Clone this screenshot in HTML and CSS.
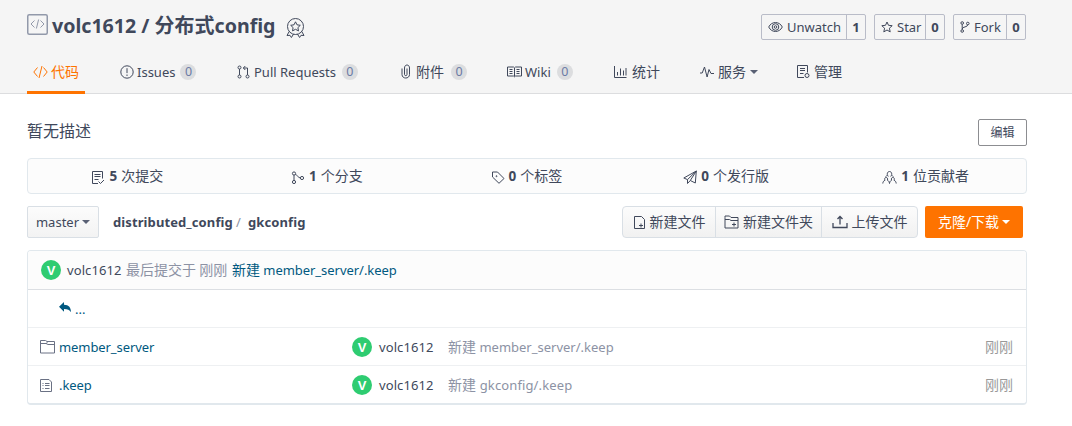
FILE: index.html
```html
<!DOCTYPE html>
<html lang="zh-CN">
<head>
<meta charset="utf-8">
<title>volc1612 / 分布式config</title>
<link rel="stylesheet" href="styles.css">
</head>
<body>
<header class="header">
  <div class="title-row">
    <h1 class="title">
      <svg class="title-icon" width="21" height="21" viewBox="0 0 21 21"><rect x=".75" y=".75" width="19.5" height="19.5" rx="1.5" stroke-width="1.5"/><path d="M7.500 6.500 4 10l3.500 3.500M13.500 6.500 17 10l-3.500 3.500M11.600 5.500 9.400 14.500"/></svg>
      <span class="title-text">volc1612 / <span class="zh">分布式</span>config</span>
      <svg class="medal" width="19" height="20" viewBox="0 0 19 20"><circle cx="9.500" cy="8.500" r="8"/><path d="m9.500 3.800 1.500 3 3.300.5-2.400 2.300.6 3.300-3-1.600-3 1.600.6-3.300-2.400-2.300 3.300-.5zM3.200 13.500 1 17.500l3-.2 1.400 2.200 2.200-3.500M15.800 13.500l2.200 4-3-.2-1.400 2.200-2.200-3.500"/></svg>
    </h1>
    <div class="counters">
      <div class="counter watch">
        <span class="counter-label"><svg width="15" height="12" viewBox="0 0 15 12"><path d="M.7 6C3.500 0 11.500 0 14.300 6 11.500 12 3.500 12 .7 6z"/><circle cx="7.500" cy="6" r="3.300"/><circle cx="7.500" cy="6" r="1.300"/></svg>Unwatch</span><b>1</b>
      </div>
      <div class="counter star">
        <span class="counter-label"><svg width="12" height="12" viewBox="0 0 12 12"><path d="m6 1 1.500 3.300 3.700.4-2.800 2.500.8 3.700L6 9l-3.200 1.900.8-3.700L.8 4.700l3.700-.4z"/></svg>Star</span><b>0</b>
      </div>
      <div class="counter fork">
        <span class="counter-label"><svg width="10" height="12" viewBox="0 0 10 12"><circle cx="2.200" cy="2" r="1.300"/><circle cx="7.800" cy="2.500" r="1.300"/><circle cx="2.200" cy="10" r="1.300"/><path d="M2.200 3.300v5.400M7.800 3.800c0 2.500-5.600 1.700-5.600 4.200"/></svg>Fork</span><b>0</b>
      </div>
    </div>
  </div>
  <nav class="nav">
    <a class="tab active"><svg width="15" height="14" viewBox="0 0 15 14"><path d="M4.500 2.500.8 7l3.700 4.500M10.500 2.500 14.200 7l-3.700 4.500M9 1 6 13"/></svg><span class="zh">代码</span></a>
    <a class="tab issues"><svg width="14" height="14" viewBox="0 0 14 14"><circle cx="7" cy="7" r="6.200"/><path d="M7 3.200v4.900M7 9.500v1.500"/></svg><span>Issues</span><i class="badge">0</i></a>
    <a class="tab pulls"><svg width="14" height="14" viewBox="0 0 14 14"><circle cx="2.500" cy="2.500" r="1.500"/><circle cx="2.500" cy="11.500" r="1.500"/><circle cx="10.500" cy="11.500" r="1.500"/><path d="M2.500 4v6M10.500 10V3H6.500M8.300 1 6.300 3l2 2"/></svg><span>Pull Requests</span><i class="badge">0</i></a>
    <a class="tab files"><svg width="12" height="15" viewBox="0 0 12 15"><path d="M2 4.500v6c0 4.700 7.500 4.700 7.500 0V4c0-4-5-4-5 0v6.500c0 1.500 2.500 1.500 2.500 0V4.500"/></svg><span class="zh">附件</span><i class="badge">0</i></a>
    <a class="tab wiki"><svg width="15" height="14" viewBox="0 0 15 14"><path d="M.5 2h6l1 .8 1-.8h6v9h-6l-1 .8-1-.8h-6zM7.500 3v8.500M2.500 4.500h3M2.500 6.500h3M2.500 8.500h3M9.500 4.500h3M9.500 6.500h3M9.500 8.500h3"/></svg><span>Wiki</span><i class="badge">0</i></a>
    <a class="tab"><svg width="14" height="14" viewBox="0 0 14 14"><path d="M.5 1v11.500h12M3.500 7v3.500M6.500 3.500v7M9.500 5.500v5M12 3v7.500"/></svg><span class="zh">统计</span></a>
    <a class="tab"><svg width="14" height="14" viewBox="0 0 14 14"><path d="M0 8h2.200l2.300-6 2.600 10L9 4.500l2 4h3"/></svg><span class="zh">服务</span><i class="caret"></i></a>
    <a class="tab manage"><svg width="13" height="15" viewBox="0 0 13 15"><path d="M7 13.500H.5v-12h10v7M3 4.500h5M3 6.500h5M3 9.500h3.500"/><circle cx="10" cy="11.500" r="2"/></svg><span class="zh">管理</span></a>
  </nav>
</header>
<main class="main">
  <div class="desc-row"><span class="desc">暂无描述</span><button class="edit">编辑</button></div>
  <div class="stats">
    <div class="stat"><svg width="14" height="15" viewBox="0 0 14 15"><path d="M7 13.500H1.500v-12h10v7M3.500 4.500h6M3.500 6.500h6M3.500 9.500h4M7.500 11.500l2 2 3.500-3.500"/></svg><b>5</b><span class="zh">次提交</span></div>
    <div class="stat"><svg width="14" height="15" viewBox="0 0 14 15"><circle cx="3" cy="3.500" r="1.600"/><circle cx="3" cy="12" r="1.600"/><circle cx="11" cy="8" r="1.600"/><path d="M3 5.100v5.300M4.300 4.500c2 .4 3 3.300 5 3.500"/></svg><b>1</b><span class="zh">个分支</span></div>
    <div class="stat"><svg width="14" height="15" viewBox="0 0 14 15"><path d="M1.500 2v5L8 13.300 13 8.500 6.500 2z"/><circle cx="5.500" cy="6.200" r=".5"/></svg><b>0</b><span class="zh">个标签</span></div>
    <div class="stat"><svg width="14" height="15" viewBox="0 0 14 15"><path d="M13.300 1 .8 8l3.700 1.600L13.300 1l-1 12-5-2.500L13.300 1M4.500 9.600v3.900l2.800-3"/></svg><b>0</b><span class="zh">个发行版</span></div>
    <div class="stat"><svg width="15" height="15" viewBox="0 0 15 15"><path d="M5.300 4.500c-.5-4 4.900-4 4.400 0-.2 1-.7 1.500-1 2M5.300 4.500c.2 1 .7 1.500 1 2M5.200 5.200 3.700 6.700M9.800 5.200l1.500 1.500M.8 13.500c.2-2 .9-2.700 2.200-3.200C1.300 6.500 6.700 6.500 5.500 10.300c1 .4 1.700 1.300 2 3.200.3-1.900 1-2.800 2-3.200-1.200-3.800 4.200-3.800 2.500 0 1.300.5 2 1.200 2.200 3.200"/></svg><b>1</b><span class="zh">位贡献者</span></div>
  </div>
  <div class="toolbar">
    <button class="branch">master<i class="caret"></i></button>
    <div class="crumbs"><b class="repo">distributed_config</b><span>/</span><b class="dir">gkconfig</b></div>
    <div class="group">
      <button class="new-file"><svg width="13" height="15" viewBox="0 0 13 15"><path d="M1.500 1.500h7l3 3v9h-10zM6 10.500h4M8 8.500v4"/></svg>新建文件</button>
      <button class="new-dir"><svg width="15" height="14" viewBox="0 0 15 14"><path d="M1 2.500V1h4.500L7 2.500h7V13H1zM1 4.500h4.500L7 5.500h7M8 9.500h4M10 7.500v4"/></svg>新建文件夹</button>
      <button class="upload"><svg width="16" height="14" viewBox="0 0 16 14"><path d="M1 8v4.500h14V8M8 9.500V1.500M5.500 4 8 1.500 10.500 4" stroke-width="1.300"/></svg>上传文件</button>
    </div>
    <button class="clone"><span>克隆/下载</span><i class="caret"></i></button>
  </div>
  <section class="tree">
    <div class="commit"><i class="avatar">V</i><span class="author">volc1612</span><span class="muted zh">最后提交于 刚刚</span><a class="link"><span class="zh">新建</span> <span>member_server/.keep</span></a></div>
    <div class="row up"><svg class="reply" width="13" height="11" viewBox="0 0 13 11"><path d="M5 0v2.700c5 .2 7 2.800 7 7.600-1.500-2.600-3.300-3.400-7-3.400v2.800L0 4.700z"/></svg><a class="link">...</a></div>
    <div class="row">
      <div class="name"><svg width="16" height="15" viewBox="0 0 16 15"><path d="M.5 3V1.500h5L7 2.500h7.500V14H.5V3M.5 4.500H6l1.500-1M6 4.500l2 1h6.500"/></svg><a class="link latin">member_server</a></div>
      <div class="who"><i class="avatar">V</i>volc1612</div>
      <div class="msg"><span class="zh">新建</span> <span>member_server/.keep</span></div>
      <div class="age zh">刚刚</div>
    </div>
    <div class="row">
      <div class="name"><svg width="16" height="15" viewBox="0 0 16 15"><path d="M.5 1.500H9l2.500 2.500v9.500H.5zM2.500 5.500h1M5 5.500h4.500M2.500 7.500h1M5 7.500h4.500M2.500 10.500h1M5 10.500h4.500"/></svg><a class="link latin">.keep</a></div>
      <div class="who"><i class="avatar">V</i>volc1612</div>
      <div class="msg keep"><span class="zh">新建</span> gkconfig/.keep</div>
      <div class="age zh">刚刚</div>
    </div>
  </section>
</main>
</body>
</html>
```

FILE: styles.css
```css
* { box-sizing: border-box; }
body {
  margin: 0;
  background: #fff;
  color: #40485b;
  font: 13px/20px "Noto Sans", "Noto Sans CJK SC", sans-serif;
  white-space: nowrap;
}
svg { flex: none; fill: none; stroke: currentColor; stroke-width: 1; }
i { font-style: normal; }
button { font: 14px/20px "Noto Sans", "Noto Sans CJK SC", sans-serif; color: inherit; padding: 0; }
.zh { font-size: 14px; line-height: 18px; font-family: "Noto Sans CJK SC", sans-serif; }
.latin { letter-spacing: -.08px; }
.caret { border: 4px solid transparent; border-top-color: currentColor; border-bottom: 0; margin-left: 3px; flex: none; }

.header {
  height: 94px;
  padding-left: 27px;
  background: #f5f5f5;
  box-shadow: inset 0 -1px #dcdddf;
  display: flex;
  flex-direction: column;
}
.title-row { height: 51px; width: 999px; display: flex; justify-content: space-between; align-items: flex-start; padding-top: 14px; }
.title { margin: -1px 0 0; height: 26px; display: flex; align-items: center; font-size: 19.600px; line-height: 26px; }
.title .zh { font-size: 20px; font-weight: bold; }
.title-icon { color: #9299aa; margin: -4px 4px 0 0; }
.title-text { width: 224px; }
.medal { margin-left: 10px; margin-top: 3px; }
.counters { display: flex; gap: 8px; }
.counter { height: 26px; display: flex; border: 1px solid #b9bcc8; border-radius: 2px; line-height: 24px; }
.counter-label { flex: 1; display: flex; align-items: center; gap: 4px; padding-left: 6px; }
.counter b { width: 19px; text-align: center; border-left: 1px solid #b9bcc8; }
.watch { width: 105px; }
.star { width: 71px; }
.fork { width: 73px; }

.nav { height: 43px; display: grid; grid-template-columns: 87px 117px 163px 107px 107px 86px 97px 60px; }
.tab { display: flex; align-items: center; gap: 4px; padding: 0 6px 1px; }
.tab .zh { margin-top: -2px; }
.tab svg { margin-top: -1px; }
.active { width: 58px; color: #fe7300; border-bottom: 3px solid #fe7300; padding: 2px 0 0 6px; gap: 3px; }
.issues, .pulls, .wiki { gap: 3px; }
.badge { width: 16px; height: 16px; margin-left: 3px; border-radius: 8px; background: #dcdddf; color: #6b7ba5; font-size: 12.500px; line-height: 16px; text-align: center; }
.issues .badge { margin-left: 2px; }
.tab .caret { margin-left: 0; }

.main { width: 1000px; margin-left: 27px; }
.desc-row { height: 64px; padding-top: 25px; display: flex; justify-content: space-between; align-items: flex-start; }
.desc { font: 16px/24px "Noto Sans CJK SC", sans-serif; margin-top: -1px; }
.edit { width: 49px; height: 27px; font-size: 12px; background: #fff; border: 1px solid #8c8d91; border-radius: 2px; }
.stats { height: 36px; display: grid; grid-template-columns: repeat(5, 199.600px); background: #fcfcfc; border: 1px solid #e1e8ed; border-radius: 4px; }
.stat { display: flex; align-items: center; justify-content: center; gap: 4px; padding-right: 1px; }
.stat svg { margin-top: 3px; }
.stat b { font-size: 13.500px; margin-top: -1px; }
.stat .zh { margin-top: -2px; }

.toolbar { height: 56px; padding-top: 12px; display: flex; align-items: flex-start; }
.toolbar button { height: 32px; display: flex; align-items: center; justify-content: center; }
.branch { width: 72px; border: 1px solid #d9dfe5; border-radius: 2px; background: linear-gradient(#fcfcfc, #f3f3f3); }
button.branch { font-size: 13px; }
.branch .caret, .tab .caret { color: #596074; }
.crumbs { height: 32px; line-height: 32px; margin-left: 14px; display: flex; flex: 1; letter-spacing: .1px; }
.repo { width: 123px; }
.crumbs span { width: 12px; color: #8c92a4; }
.group { display: flex; border: 1px solid #d9dfe5; border-radius: 4px; height: 32px; background: linear-gradient(#fcfcfc, #f1f1f1); }
.group button { height: 30px; border: 0; background: none; gap: 4px; }
.group button + button { border-left: 1px solid #d9dfe5; }
.new-file { width: 92px; }
.new-dir { width: 106px; }
.upload { width: 96px; }
.clone { width: 98px; margin: 0 4px 0 7px; background: #fe7300; border: 0; border-radius: 2px; }
button.clone { color: #fff; }

.tree { height: 155px; border: 1px solid #e1e8ed; border-bottom-width: 2px; border-radius: 4px; overflow: hidden; }
.commit { height: 39px; display: flex; align-items: center; padding-left: 13px; background: #fcfcfc; border-bottom: 1px solid #dcdfe3; }
.commit .muted { margin-top: -2px; }
.commit .link { margin-top: -1px; letter-spacing: -.04px; }
.author { width: 54px; margin: 0 5px 0 6px; letter-spacing: .1px; }
.muted { width: 106px; color: #8c92a4; }
.link { color: #005980; }
.avatar { width: 20px; height: 20px; flex: none; border-radius: 50%; background: #2ecc71; color: #fff; font: bold 13px/21px "Liberation Sans", sans-serif; text-align: center; letter-spacing: 0; }
.row { height: 38px; display: grid; grid-template-columns: 311px 96px 1fr 41px; align-items: center; padding-left: 13px; border-bottom: 1px solid #eef0f2; }
.row:last-child { border: 0; }
.up { display: flex; padding-left: 31px; gap: 3px; }
.reply { fill: #005980; stroke: none; margin-top: -2px; }
.name { display: flex; align-items: center; gap: 3px; }
.name svg { color: #6a7184; margin-left: -1px; margin-right: 1px; }
.name .link { margin-left: -1px; }
.who { display: flex; align-items: center; gap: 7px; letter-spacing: .1px; }
.msg { color: #8c92a4; }
.keep { letter-spacing: .12px; }
.age { color: #999; margin-top: -2px; }
```
